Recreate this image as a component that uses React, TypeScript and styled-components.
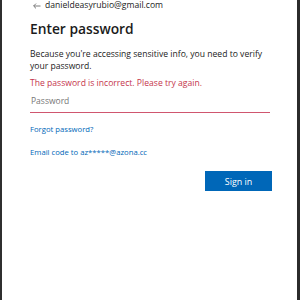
import React from "react";
import styled, { createGlobalStyle } from "styled-components";

const GlobalStyle = createGlobalStyle`
  html, body { margin: 0; padding: 0; background: #ffffff; }
  body { font-family: "Open Sans", "Noto Sans", sans-serif; }
`;

const Frame = styled.div`
  box-sizing: border-box;
  width: 300px;
  height: 300px;
  display: flex;
  background: #ffffff;
  border-left: 2px solid #2f2f2f;
  border-right: 3px solid #2b2b2b;
`;

const Content = styled.div`
  flex: 1;
  display: flex;
  flex-direction: column;
  padding: 0 25px 0 28px;
`;

const Identity = styled.div`
  display: flex;
  align-items: center;
  gap: 4px;
  height: 11px;
  padding-left: 3px;
  color: #1b1b1b;
  font-size: 8.6px;
  line-height: 11px;
`;

const Title = styled.h1`
  margin: 8px 0 0;
  font-size: 13.8px;
  font-weight: 600;
  line-height: 20px;
  color: #1b1b1b;
`;

const Description = styled.p`
  margin: 9px 0 0;
  font-size: 8.6px;
  line-height: 12px;
  color: #1b1b1b;
`;

const ErrorText = styled.div`
  margin-top: 5px;
  font-size: 8.6px;
  line-height: 12px;
  color: #c5344c;
`;

const Field = styled.div`
  margin-right: 2px;
  padding: 6px 0 5px 1px;
  line-height: 12px;
  border-bottom: 1px solid #d0566f;
  font-size: 8.5px;
  color: #767676;
`;

const Link = styled.a<{ $gap: number }>`
  display: block;
  margin-top: ${(p) => p.$gap}px;
  font-size: 7.7px;
  line-height: 12px;
  color: #0067b8;
  text-decoration: none;
`;

const Actions = styled.div`
  display: flex;
  justify-content: flex-end;
  margin-top: 13px;
`;

const Button = styled.button`
  width: 67px;
  height: 20px;
  border: none;
  background: #0067b8;
  color: #ffffff;
  font-family: "Open Sans", sans-serif;
  font-size: 8.9px;
  padding: 0;
`;

const Arrow = () => (
  <svg width="8" height="6" viewBox="0 0 8 6" fill="none" stroke="#6b6b6b" strokeWidth="0.9">
    <path d="M7.5 3H0.8M3 0.6L0.6 3L3 5.4" />
  </svg>
);

export default function App() {
  return (
    <>
      <GlobalStyle />
      <Frame>
        <Content>
          <Identity>
            <Arrow />
            <span>danieldeasyrubio@gmail.com</span>
          </Identity>
          <Title>Enter password</Title>
          <Description>
            Because you're accessing sensitive info, you need to verify your password.
          </Description>
          <ErrorText>The password is incorrect. Please try again.</ErrorText>
          <Field>Password</Field>
          <Link href="#" $gap={10}>Forgot password?</Link>
          <Link href="#" $gap={11}>Email code to az*****@azona.cc</Link>
          <Actions>
            <Button>Sign in</Button>
          </Actions>
        </Content>
      </Frame>
    </>
  );
}
